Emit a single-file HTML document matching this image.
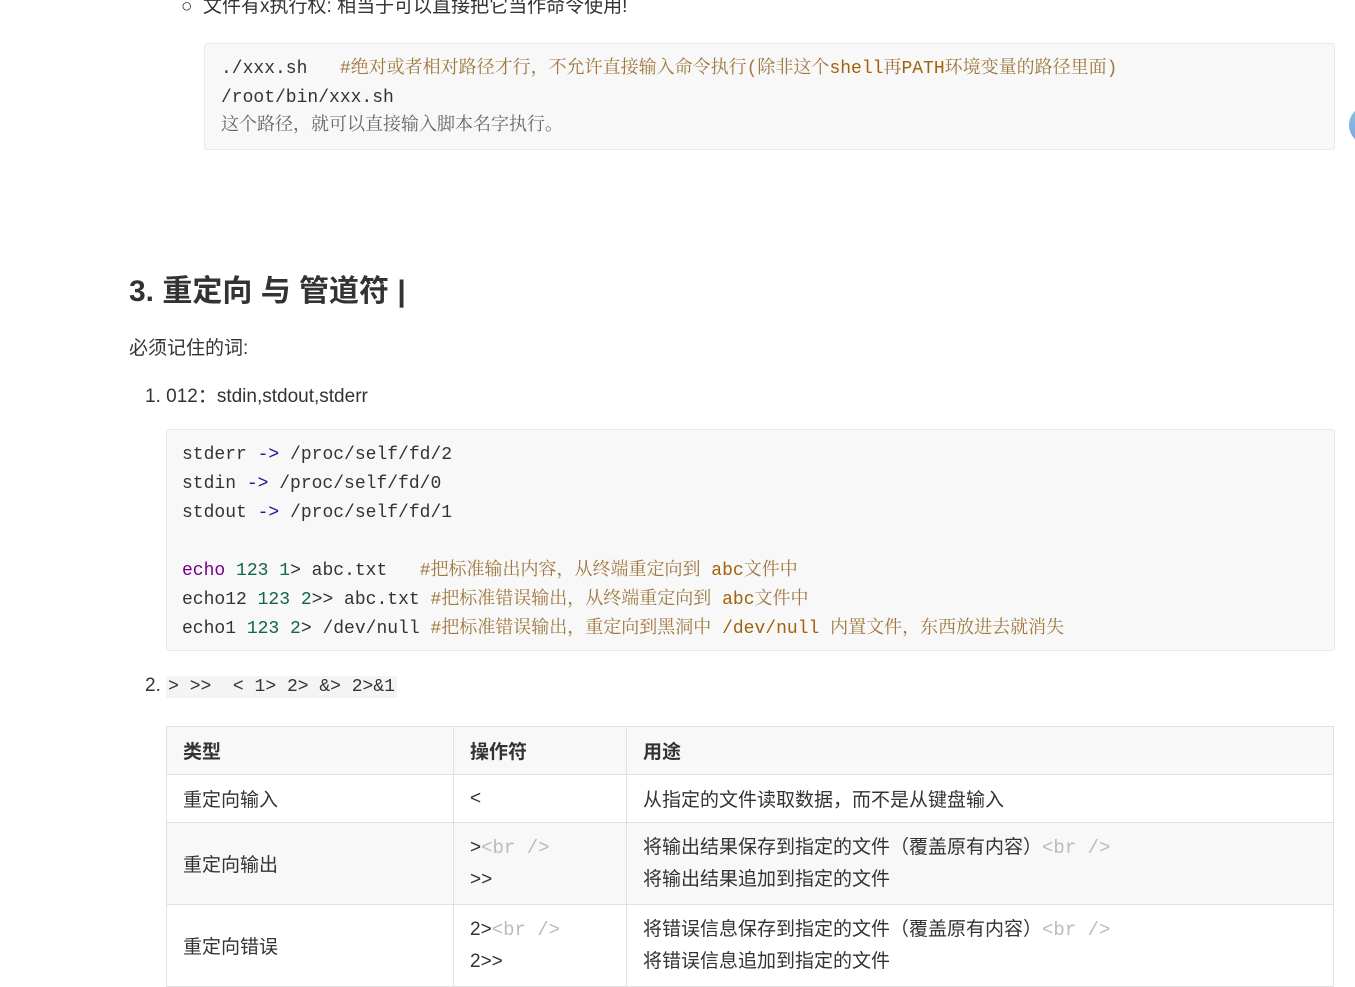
<!DOCTYPE html>
<html><head><meta charset="utf-8">
<style>
body{margin:0;width:1355px;height:925px;overflow:hidden;background:#fff;position:relative;font-family:"Liberation Sans","Noto Sans CJK SC",sans-serif;color:#333;}
.a{position:absolute;white-space:nowrap;}
.code{position:absolute;background:#f8f8f8;border:1px solid #e7eaed;border-radius:3px;}
.cl{position:absolute;white-space:pre;font-family:"Liberation Mono","Noto Sans CJK SC",monospace;font-size:18px;color:#333;line-height:29px;}
.cm{color:#a0773e;font-family:"Liberation Mono","Noto Serif CJK SC",serif;}
.kw{color:#a0620a;}
.bl{color:#221199;}
.nm{color:#116644;}
.pu{color:#770088;}
table{position:absolute;left:166px;top:726px;width:1168px;border-collapse:collapse;font-size:19px;}
td,th{border:1px solid #dfe2e5;padding:0 16px;text-align:left;vertical-align:middle;}
th{font-weight:bold;background:#f8f8f8;height:47px;}
.g{color:#bbb;font-family:"Liberation Mono",monospace;}
</style></head><body>
<div class="a" style="left:181px;top:-9px;font-size:19px;">○&nbsp; 文件有x执行权: 相当于可以直接把它当作命令使用!</div>
<div class="code" style="left:204px;top:43px;width:1129px;height:105px;"></div>
<div class="cl" style="left:221px;top:55px;">./xxx.sh   <span class="cm">#绝对或者相对路径才行，不允许直接输入命令执行(除非这个<span class="kw">shell</span>再<span class="kw">PATH</span>环境变量的路径里面)</span></div>
<div class="cl" style="left:221px;top:84px;">/root/bin/xxx.sh</div>
<div class="cl" style="left:221px;top:112px;"><span class="cm" style="color:#666">这个路径，就可以直接输入脚本名字执行。</span></div>
<div style="position:absolute;left:1349px;top:105px;width:40px;height:40px;border-radius:50%;background:linear-gradient(#7cc8e8,#8aa0e0);"></div>

<div class="a" style="left:129px;top:266px;font-size:30px;font-weight:bold;color:#333;">3. 重定向 与 管道符 |</div>
<div class="a" style="left:129px;top:333px;font-size:19px;">必须记住的词:</div>
<div class="a" style="left:145px;top:381px;font-size:19px;">1. 012：stdin,stdout,stderr</div>

<div class="code" style="left:166px;top:429px;width:1167px;height:220px;"></div>
<div class="cl" style="left:182px;top:441px;">stderr <span class="bl">-&gt;</span> /proc/self/fd/2
stdin <span class="bl">-&gt;</span> /proc/self/fd/0
stdout <span class="bl">-&gt;</span> /proc/self/fd/1

<span class="pu">echo</span> <span class="nm">123</span> <span class="nm">1</span>&gt; abc.txt   <span class="cm">#把标准输出内容，从终端重定向到 <span class="kw">abc</span>文件中</span>
echo12 <span class="nm">123</span> <span class="nm">2</span>&gt;&gt; abc.txt <span class="cm">#把标准错误输出，从终端重定向到 <span class="kw">abc</span>文件中</span>
echo1 <span class="nm">123</span> <span class="nm">2</span>&gt; /dev/null <span class="cm">#把标准错误输出，重定向到黑洞中 <span class="kw">/dev/null</span> 内置文件，东西放进去就消失</span></div>

<div class="a" style="left:145px;top:675px;font-size:19px;">2. <span style="background:#f3f4f4;font-family:'Liberation Mono',monospace;font-size:18px;padding:1px 2px;white-space:pre;">&gt; &gt;&gt;  &lt; 1&gt; 2&gt; &amp;&gt; 2&gt;&amp;1</span></div>

<table>
<tr><th style="width:254px">类型</th><th style="width:140px">操作符</th><th>用途</th></tr>
<tr style="height:48px"><td>重定向输入</td><td>&lt;</td><td>从指定的文件读取数据，而不是从键盘输入</td></tr>
<tr style="height:82px;background:#f8f8f8"><td>重定向输出</td><td style="line-height:32px">&gt;<span class="g">&lt;br /&gt;</span><br>&gt;&gt;</td><td style="line-height:32px">将输出结果保存到指定的文件（覆盖原有内容）<span class="g">&lt;br /&gt;</span><br>将输出结果追加到指定的文件</td></tr>
<tr style="height:82px"><td>重定向错误</td><td style="line-height:32px">2&gt;<span class="g">&lt;br /&gt;</span><br>2&gt;&gt;</td><td style="line-height:32px">将错误信息保存到指定的文件（覆盖原有内容）<span class="g">&lt;br /&gt;</span><br>将错误信息追加到指定的文件</td></tr>
</table>
</body></html>
